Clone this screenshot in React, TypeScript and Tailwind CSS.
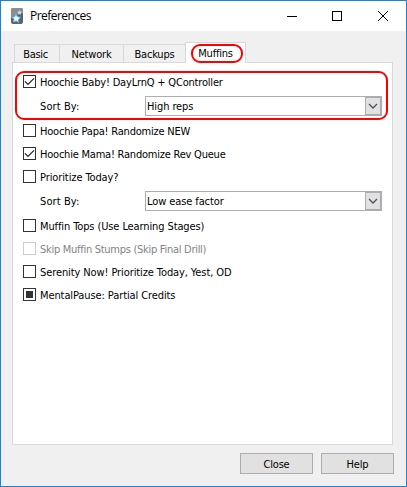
import React from 'react';

type CheckState = 'on' | 'off' | 'partial';

function Check({ label, state = 'off', disabled = false, track, className = '' }: {
  label: string; state?: CheckState; disabled?: boolean; track: string; className?: string;
}) {
  return (
    <label className={`flex h-[13px] items-center gap-[4px] ${className}`}>
      <span className={`flex size-[13px] shrink-0 items-center justify-center border bg-white ${disabled ? 'border-[#cccccc]' : 'border-[#333333]'}`}>
        {state === 'on' && (
          <svg width="11" height="11" viewBox="0 0 11 11" fill="none" stroke="#222" strokeWidth="1.2">
            <path d="M1 5.3 L4 8.3 L10 2.3" />
          </svg>
        )}
        {state === 'partial' && <span className="size-[7px] bg-[#333333]" />}
      </span>
      <span className={`whitespace-nowrap pt-[2px] ${track} ${disabled ? 'text-[#838383]' : 'text-black'}`}>{label}</span>
    </label>
  );
}

function SortRow({ value, track }: { value: string; track: string }) {
  return (
    <div className="my-[8px] flex h-[20px] items-center pl-[17px]">
      <span className="w-[105px] whitespace-nowrap tracking-[0.1px]">Sort By:</span>
      <div className="flex h-[20px] w-[237px] items-center justify-between border border-[#abadb3] bg-white pl-[1px]">
        <span className={`whitespace-nowrap ${track}`}>{value}</span>
        <span className="flex h-[18px] w-[16px] items-center justify-center border border-[#abadb3] bg-[#e1e1e1]">
          <svg width="10" height="6" viewBox="0 0 10 6" fill="none" stroke="#505050" strokeWidth="1.3">
            <path d="M1 1 L5 5 L9 1" />
          </svg>
        </span>
      </div>
    </div>
  );
}

function AppIcon() {
  return (
    <svg width="12" height="16" viewBox="0 0 12 16">
      <rect x="0" y="0" width="12" height="16" rx="2" fill="#5f6163" />
      <path d="M0 2Q0 0 2 0H10Q12 0 12 2V5Q5 6 0 10Z" fill="#8b8d8f" />
      <path d="M5 5.8L6.3 8.6L9.6 9.4L7.4 11.5L7.7 14.4L5.2 13L2.4 14L3 11.3L1 9.2L3.9 8.6Z" fill="#e8f6ff" stroke="#55b5ec" strokeWidth=".9" />
      <path d="M8.7 2L9.4 3.6L11.1 4L9.8 5.1L10 6.8L8.5 6L7 6.7L7.3 5L6.2 3.8L7.9 3.6Z" fill="#b5e2fb" />
    </svg>
  );
}

export default function App() {
  return (
    <div className="flex h-[487px] w-[407px] flex-col border border-[#1883d7] bg-[#f0f0f0] font-['DejaVu_Sans_Condensed','DejaVu_Sans',sans-serif] text-[11px] leading-[13px] text-black">
      <header className="flex h-[30px] shrink-0 items-center bg-white pl-[10px]">
        <AppIcon />
        <h1 className="ml-[7px] font-['Open_Sans',sans-serif] text-[12px] leading-[16px] tracking-[-0.55px]">Preferences</h1>
        <svg className="ml-auto mr-[17px]" width="102" height="12" viewBox="0 0 102 12" fill="none" stroke="#000" shapeRendering="crispEdges">
          <path d="M0 6.5H10" />
          <rect x="45.5" y="1.5" width="9" height="9" />
          <path d="M91 1L101 11M101 1L91 11" shapeRendering="auto" />
        </svg>
      </header>

      <nav className="relative z-10 ml-[13px] mt-[11px] flex h-[21px] shrink-0 items-end tracking-[-0.2px]">
        <span className="mb-px flex h-[18px] w-[46px] items-center justify-center border border-b-0 border-[#d9d9d9] pr-[3px] pt-[2px] tracking-[-0.3px]">Basic</span>
        <span className="mb-px flex h-[18px] w-[64px] items-center justify-center border-r border-t border-[#d9d9d9] pt-[2px]">Network</span>
        <span className="mb-px flex h-[18px] w-[61px] items-center justify-center border-t border-[#d9d9d9] pt-[2px]">Backups</span>
        <span className="relative flex h-[21px] w-[61px] items-center justify-center border border-b-0 border-[#d9d9d9] bg-white">
          Muffins
          <span className="absolute left-[5px] top-[1px] h-[19px] w-[52px] rounded-[9px] border-2 border-[#f00]" />
        </span>
      </nav>

      <main className="relative -mt-px ml-[11px] flex h-[383px] w-[381px] shrink-0 flex-col border border-[#d9d9d9] bg-white pl-[10px] pt-[12px]">
        <span className="absolute left-[2px] top-[8px] h-[49px] w-[373px] rounded-[9px] border-2 border-[#f00]" />
        <Check label="Hoochie Baby! DayLrnQ + QController" state="on" track="tracking-[-0.19px]" />
        <SortRow value="High reps" track="tracking-[-0.1px]" />
        <Check label="Hoochie Papa! Randomize NEW" track="tracking-[-0.21px]" />
        <Check className="mt-[10px]" label="Hoochie Mama! Randomize Rev Queue" state="on" track="tracking-[-0.22px]" />
        <Check className="mt-[10px]" label="Prioritize Today?" track="tracking-[-0.1px]" />
        <SortRow value="Low ease factor" track="tracking-[-0.1px]" />
        <Check label="Muffin Tops (Use Learning Stages)" track="tracking-[-0.11px]" />
        <Check className="mt-[10px]" label="Skip Muffin Stumps (Skip Final Drill)" disabled track="tracking-[-0.28px]" />
        <Check className="mt-[10px]" label="Serenity Now! Prioritize Today, Yest, OD" track="tracking-[-0.1px]" />
        <Check className="mt-[10px]" label="MentalPause: Partial Credits" state="partial" track="tracking-[-0.1px]" />
      </main>

      <footer className="mr-[12px] mt-[8px] flex justify-end gap-[8px] tracking-[-0.2px]">
        <button className="h-[21px] w-[73px] border border-[#adadad] bg-[#e1e1e1] pt-[2px]">Close</button>
        <button className="h-[21px] w-[73px] border border-[#adadad] bg-[#e1e1e1] pt-[2px]">Help</button>
      </footer>
    </div>
  );
}
